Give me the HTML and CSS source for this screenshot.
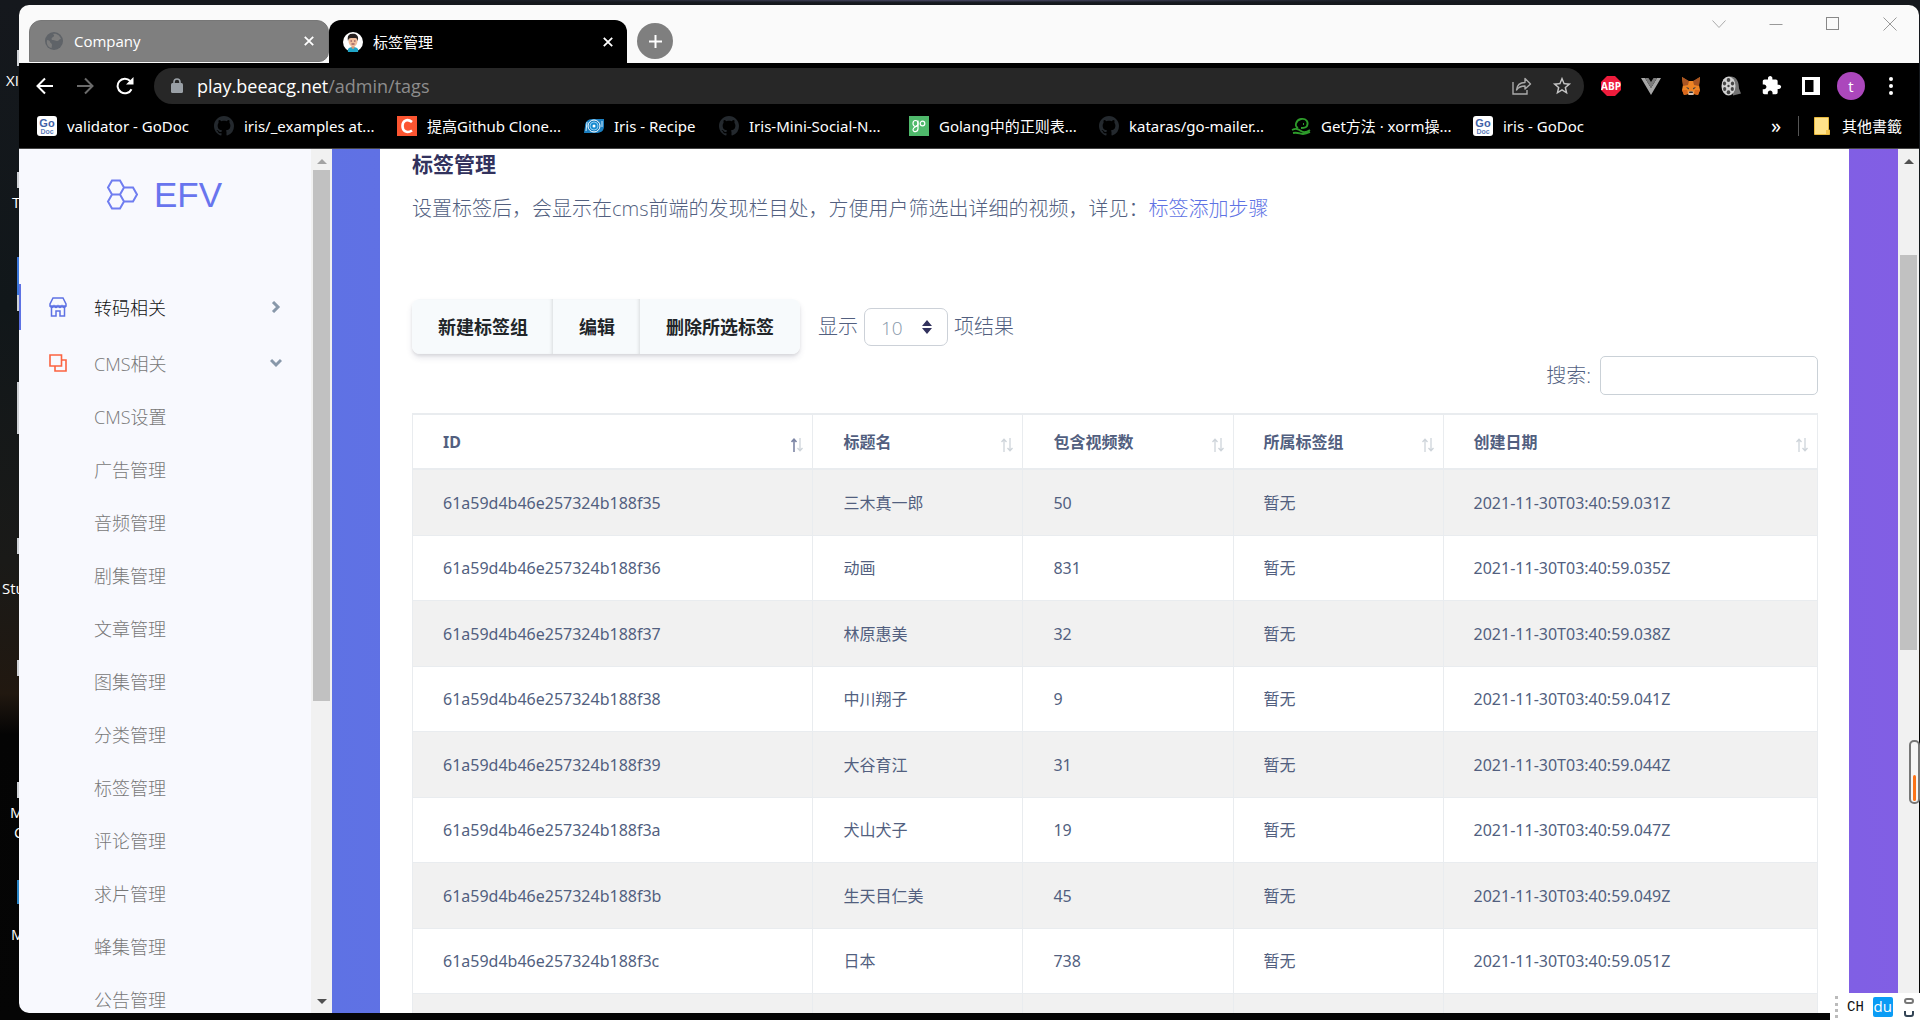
FILE: index.html
```html
<!DOCTYPE html>
<html lang="zh-CN">
<head>
<meta charset="utf-8">
<title>标签管理</title>
<link rel="stylesheet" href="styles.css">
</head>
<body>
<svg class="defs" aria-hidden="true">
  <symbol id="github" viewBox="0 0 16 16"><path fill="#24292e" d="M8 0C3.58 0 0 3.58 0 8c0 3.54 2.29 6.53 5.47 7.59.4.07.55-.17.55-.38 0-.19-.01-.82-.01-1.49-2.01.37-2.53-.49-2.69-.94-.09-.23-.48-.94-.82-1.13-.28-.15-.68-.52-.01-.53.63-.01 1.08.58 1.23.82.72 1.21 1.87.87 2.33.66.07-.52.28-.87.51-1.07-1.78-.2-3.64-.89-3.64-3.95 0-.87.31-1.59.82-2.15-.08-.2-.36-1.02.08-2.12 0 0 .67-.21 2.2.82.64-.18 1.32-.27 2-.27.68 0 1.36.09 2 .27 1.53-1.04 2.2-.82 2.2-.82.44 1.1.16 1.92.08 2.12.51.56.82 1.27.82 2.15 0 3.07-1.87 3.75-3.65 3.95.29.25.54.73.54 1.48 0 1.07-.01 1.93-.01 2.2 0 .21.15.46.55.38A8.013 8.013 0 0016 8c0-4.42-3.58-8-8-8z"/></symbol>
  <symbol id="godoc" viewBox="0 0 20 20"><rect width="20" height="20" rx="3" fill="#fff"/><text x="10" y="11" text-anchor="middle" font-family="Liberation Sans" font-weight="700" font-size="11" fill="#3f62a8">Go</text><text x="10" y="18" text-anchor="middle" font-family="Liberation Sans" font-weight="700" font-size="7" fill="#5d7dbb">Doc</text></symbol>
  <symbol id="close" viewBox="0 0 10 10"><path d="M0.8 0.8l8.4 8.4M9.2 0.8L0.8 9.2" stroke="#fff" stroke-width="1.8"/></symbol>
  <symbol id="sort" viewBox="0 0 12 14"><path d="M3 14V1.500M.5 4L3 1.200 5.500 4" fill="none" stroke="#ced4da" stroke-width="1.300"/><path d="M9 0v12.500M6.500 10L9 12.800 11.500 10" fill="none" stroke="#ced4da" stroke-width="1.300"/></symbol>
  <symbol id="sort-up" viewBox="0 0 12 14"><path d="M3 14V1.500M.5 4L3 1.200 5.500 4" fill="none" stroke="#7d86a5" stroke-width="1.600"/><path d="M9 0v12.500M6.500 10L9 12.800 11.500 10" fill="none" stroke="#ced4da" stroke-width="1.300"/></symbol>
  <symbol id="tri-up" viewBox="0 0 10 5"><path d="M0 5L5 0l5 5z" fill="currentColor"/></symbol>
  <symbol id="tri-down" viewBox="0 0 10 5"><path d="M0 0l5 5 5-5z" fill="currentColor"/></symbol>
</svg>

<div class="desktop" aria-hidden="true">
  <i class="shape s1"></i><i class="shape s2"></i><i class="shape s3"></i><i class="shape s4"></i><i class="shape s5"></i><i class="shape s6"></i><i class="shape s7"></i><i class="shape s8"></i><i class="shape s9"></i>
  <span class="label l1">XI</span><span class="label l2">T</span><span class="label l3">Stu</span><span class="label l4">M</span><span class="label l5">C</span><span class="label l6">M</span>
</div>

<div class="window">
  <header class="tabs">
    <div class="tab tab-idle">
      <svg class="favicon" viewBox="0 0 18 18"><circle cx="9" cy="9" r="9" fill="#5f6368"/><path d="M2 8c2 0 3 1 3 2s2 1 2 3-1 2 0 3c-3 0-6-3-5-8zM8 2c4-1 7 2 8 5-2 0-2 2-4 2s-2-1-4-1-2-2 0-3 1-2 0-3z" fill="#7d7d7d"/></svg>
      <span class="tab-title">Company</span>
      <button class="plain" aria-label="关闭"><svg class="x" ><use href="#close"/></svg></button>
    </div>
    <div class="tab tab-active">
      <svg class="avatar-icon" viewBox="0 0 20 20"><circle cx="10" cy="10" r="10" fill="#fff"/><path d="M5 20c-1-4 2-5 5-5s6 1 5 5a10 10 0 0 1-10 0z" fill="#20a6c8"/><path d="M8.500 13h3v3l-1.500 1-1.500-1z" fill="#d99a74"/><ellipse cx="10" cy="9" rx="4.500" ry="5.500" fill="#f0bd9b"/><path d="M5 9C4 4 6 2 8 2c3-1 8 0 7 6l-.5 1c0-2-1-3-2-3H8C6 6 5.500 7 5 9z" fill="#27201f"/><path d="M7.500 9h1.500M11 9h1.500M8.500 12h3" stroke="#513" stroke-width=".8"/></svg>
      <span class="tab-title">标签管理</span>
      <button class="plain" aria-label="关闭"><svg class="x"><use href="#close"/></svg></button>
    </div>
    <button class="new-tab" aria-label="新标签页"><svg viewBox="0 0 15 15" width="15" height="15"><path d="M7.500 1v13M1 7.500h13" stroke="#fff" stroke-width="2"/></svg></button>
    <div class="controls">
      <button class="plain" aria-label="搜索标签页"><svg width="14" height="14" viewBox="0 0 14 14"><path d="M.5 3.500L7 10.500l6.500-7" fill="none" stroke="#aaa"/></svg></button>
      <button class="plain" aria-label="最小化"><svg width="14" height="14" viewBox="0 0 14 14"><path d="M.5 7.500h13" stroke="#999"/></svg></button>
      <button class="plain" aria-label="最大化"><svg width="14" height="14" viewBox="0 0 14 14"><rect x=".5" y=".5" width="12" height="12" fill="none" stroke="#888"/></svg></button>
      <button class="plain" aria-label="关闭窗口"><svg width="14" height="14" viewBox="0 0 14 14"><path d="M.5.5l13 13m0-13l-13 13" stroke="#999"/></svg></button>
    </div>
  </header>

  <div class="toolbar">
    <div class="nav-buttons">
      <button class="plain" aria-label="后退"><svg width="18" height="18" viewBox="0 0 18 18"><path d="M17 9H2M9 1.500L1.500 9 9 16.500" fill="none" stroke="#fff" stroke-width="2"/></svg></button>
      <button class="plain" aria-label="前进"><svg width="18" height="18" viewBox="0 0 18 18"><path d="M1 9h15M9 1.500L16.500 9 9 16.500" fill="none" stroke="#6b6b6b" stroke-width="2"/></svg></button>
      <button class="plain" aria-label="刷新"><svg width="18" height="18" viewBox="0 0 18 18"><path d="M15.500 12.200A7.300 7.300 0 1 1 14.200 4" fill="none" stroke="#fff" stroke-width="2"/><path d="M17.500 0v7.500H10z" fill="#fff"/></svg></button>
    </div>
    <div class="omnibox">
      <svg width="12" height="15" viewBox="0 0 12 15"><rect x="0" y="5" width="12" height="10" rx="1.500" fill="#9aa0a6"/><path d="M3 6V4a3 3 0 0 1 6 0v2" fill="none" stroke="#9aa0a6" stroke-width="1.600"/></svg>
      <p class="url">play.beeacg.net<span>/admin/tags</span></p>
      <button class="plain" aria-label="分享"><svg width="20" height="18" viewBox="0 0 20 18"><path d="M1 5v12h14v-4" fill="none" stroke="#aaa" stroke-width="1.400"/><path d="M4.500 13c.5-5 3.500-7.500 8.500-7.500V1.500L18.500 7 13 12V9c-4 0-6.500 1-8.500 4z" fill="none" stroke="#aaa" stroke-width="1.400" stroke-linejoin="round"/></svg></button>
      <button class="plain" aria-label="加入书签"><svg width="22" height="22" viewBox="0 0 24 24"><path fill="#c4c4c4" d="M22 9.240l-7.190-.62L12 2 9.190 8.630 2 9.240l5.460 4.730L5.820 21 12 17.270 18.180 21l-1.630-7.030L22 9.240zM12 15.400l-3.760 2.270 1-4.280-3.320-2.880 4.380-.38L12 6.100l1.710 4.040 4.380.38-3.320 2.880 1 4.280L12 15.400z"/></svg></button>
    </div>
    <div class="extensions">
      <button class="plain" aria-label="ABP"><svg width="20" height="20" viewBox="0 0 20 20"><path d="M6 0h8l6 6v8l-6 6H6l-6-6V6z" fill="#ee1c3c"/><text x="10" y="13.500" font-family="Open Sans" font-weight="700" font-size="10" text-anchor="middle" fill="#fff">ABP</text></svg></button>
      <button class="plain" aria-label="Vue"><svg width="20" height="20" viewBox="0 0 20 20"><path d="M0 2h4l6 10 6-10h4L10 19z" fill="#a6a6a6"/><path d="M4 2h3.500L10 6l2.500-4H16l-6 10z" fill="#7a7a7a"/></svg></button>
      <button class="plain" aria-label="MetaMask"><svg width="20" height="20" viewBox="0 0 20 20"><path d="M1 1l6 4h6l6-4-1 8 1 5-2 5-4-1-1 1H8l-1-1-4 1-2-5 1-5z" fill="#ee8424"/><path d="M1 1l7 4-1 4-5 1zM19 1l-7 4 1 4 5 1z" fill="#a95522"/><path d="M1 14h5l1 4-4 1zM19 14h-5l-1 4 4 1z" fill="#d9671c"/><path d="M5 11l3 1-.5 1.500zM15 11l-3 1 .5 1.500z" fill="#233447"/><path d="M7.500 15.500h5V19h-5z" fill="#d7c1b3"/><path d="M8.500 15.500h3l.5 1.500H8z" fill="#22252c"/></svg></button>
      <button class="plain" aria-label="视频下载"><svg width="20" height="20" viewBox="0 0 20 20"><path d="M8 .5c8-1 10 6 10 12l2 5-8 2z" fill="#737373"/><ellipse cx="7.500" cy="10" rx="7" ry="9.500" fill="#d1d1d1"/><g fill="#444"><ellipse cx="7.500" cy="4" rx="1.800" ry="2"/><ellipse cx="3.500" cy="7.500" rx="1.600" ry="2"/><ellipse cx="11.500" cy="7.500" rx="1.600" ry="2"/><ellipse cx="3.700" cy="13" rx="1.600" ry="2"/><ellipse cx="11.300" cy="13" rx="1.600" ry="2"/><ellipse cx="7.500" cy="16.200" rx="1.800" ry="2"/><circle cx="7.500" cy="10" r="1.200"/></g></svg></button>
      <button class="plain" aria-label="扩展程序"><svg width="21" height="21" viewBox="0 0 24 24"><path fill="#fff" d="M20.500 11H19V7c0-1.100-.9-2-2-2h-4V3.500C13 2.120 11.880 1 10.500 1S8 2.120 8 3.500V5H4c-1.100 0-1.990.9-1.990 2v3.800H3.500c1.490 0 2.700 1.210 2.700 2.700s-1.210 2.700-2.700 2.700H2V20c0 1.100.9 2 2 2h3.800v-1.500c0-1.490 1.210-2.700 2.700-2.700s2.700 1.210 2.700 2.700V22H17c1.100 0 2-.9 2-2v-4h1.500c1.380 0 2.500-1.120 2.500-2.500S21.880 11 20.500 11z"/></svg></button>
      <button class="plain" aria-label="侧边栏"><svg width="18" height="18" viewBox="0 0 18 18"><path fill="#fff" fill-rule="evenodd" d="M0 0h18v18H0zM3 3v12h8.500V3z"/></svg></button>
      <button class="profile" aria-label="个人资料">t</button>
      <button class="plain" aria-label="更多"><svg width="4" height="18" viewBox="0 0 4 18" fill="#fff"><circle cx="2" cy="2" r="2"/><circle cx="2" cy="9" r="2"/><circle cx="2" cy="16" r="2"/></svg></button>
    </div>
  </div>

  <nav class="bookmarks" aria-label="书签">
    <div class="bookmark-list">
      <a href="#"><svg class="bm"><use href="#godoc"/></svg>validator - GoDoc</a>
      <a href="#"><svg class="bm"><use href="#github"/></svg>iris/_examples at...</a>
      <a href="#"><svg class="bm" viewBox="0 0 20 20"><path fill="#fc5531" d="M0 0h20v20H0z"/><path d="M15 6C10 2 5.500 5 5.500 10s4.500 8 9.500 4.500" fill="none" stroke="#fff" stroke-width="2.600"/></svg>提高Github Clone...</a>
      <a href="#"><svg class="bm" viewBox="0 0 20 20"><path d="M8 3h12v7c0 5-3 7-8 7H0l1-7c0-4 3-7 7-7z" fill="#1c7fc0"/><circle cx="10" cy="10" r="6" fill="none" stroke="#fff"/><circle cx="10" cy="10" r="4" fill="#168bd0" stroke="#a6dcfa" stroke-width=".8"/><circle cx="10" cy="10" r="1.500" fill="#fff"/><path d="M3 6l-1 9M18 5v6" stroke="#d0ecff"/></svg>Iris - Recipe</a>
      <a href="#"><svg class="bm"><use href="#github"/></svg>Iris-Mini-Social-N...</a>
      <a href="#"><svg class="bm" viewBox="0 0 20 20"><path fill="#4fb96b" d="M0 0h20v20H0z"/><g fill="none" stroke="#fff" stroke-width="1.200"><ellipse cx="6.500" cy="7.500" rx="2.500" ry="3"/><path d="M9 4.500v8c0 4-5 4-5 1 0-2 3-3 5-4.500"/><circle cx="13.500" cy="7.500" r="2.300"/></g></svg>Golang中的正则表...</a>
      <a href="#"><svg class="bm"><use href="#github"/></svg>kataras/go-mailer...</a>
      <a href="#"><svg class="bm" viewBox="0 0 20 20"><g fill="none" stroke="#2d9a2a" stroke-width="1.800"><path d="M1 14c4-2 6-1 9 1s6 1 9-1M2 17c5-1 7 1 10 1s5-1 7-2"/><path d="M7 12c-4-2-2-8 3-9 5-1 8 3 6 7-1 2-4 2-6 2"/><path d="M12 8h1"/></g></svg>Get方法 · xorm操...</a>
      <a href="#"><svg class="bm"><use href="#godoc"/></svg>iris - GoDoc</a>
    </div>
    <button class="more" aria-label="更多书签">»</button>
    <a class="other" href="#"><svg width="16" height="18" viewBox="0 0 16 18"><path fill="#ffe28a" stroke="#e8b93c" d="M.5.5h14v12l1 .5v4.500H.5z"/><path d="M12 17v-4h3v4z" fill="#f4c54f"/></svg>其他書籤</a>
  </nav>

  <div class="page">
    <aside class="sidebar">
      <a class="brand" href="#"><svg width="34" height="32" viewBox="0 0 34 32" fill="none" stroke="#6f7df0" stroke-width="2"><path d="M6 1.500h8l4 7-4 7H6l-4-7zM6 15.500h8l4 7-4 7H6l-4-7zM18 8.500h9l4 7-4 7h-9l-4-7z"/></svg>EFV</a>
      <nav class="menu">
        <a class="group current" href="#"><svg width="18" height="20" viewBox="0 0 18 20" fill="none" stroke="#5e72e4" stroke-width="1.500"><path d="M4 1h10l3 6v2H1V7zM2.500 10v9H7v-5h4v5h4.500v-9M1 9c1 2 3 2 4 0 1 2 3 2 4 0 1 2 3 2 4 0 1 2 3 2 4 0"/></svg><span>转码相关</span><svg class="chev" viewBox="0 0 12 12"><path d="M3 1l5 5-5 5"/></svg></a>
        <a class="group" href="#"><svg width="18" height="18" viewBox="0 0 18 18" fill="none" stroke="#fb6340" stroke-width="1.600"><path d="M1 1h11.500v11H1zM12.500 6H17v11H6v-5"/></svg><span>CMS相关</span><svg class="chev" viewBox="0 0 12 12"><path d="M1 3l5 5 5-5"/></svg></a>
        <ul class="submenu">
          <li><a href="#">CMS设置</a></li><li><a href="#">广告管理</a></li><li><a href="#">音频管理</a></li><li><a href="#">剧集管理</a></li><li><a href="#">文章管理</a></li><li><a href="#">图集管理</a></li><li><a href="#">分类管理</a></li><li><a href="#">标签管理</a></li><li><a href="#">评论管理</a></li><li><a href="#">求片管理</a></li><li><a href="#">蜂集管理</a></li><li><a href="#">公告管理</a></li>
        </ul>
      </nav>
    </aside>
    <div class="scrollbar scroll-side"><svg class="tri dim"><use href="#tri-up"/></svg><i class="before"></i><i class="thumb"></i><i class="after"></i><svg class="tri"><use href="#tri-down"/></svg></div>

    <div class="canvas">
      <main class="card">
        <h1>标签管理</h1>
        <p class="lead">设置标签后，会显示在cms前端的发现栏目处，方便用户筛选出详细的视频，详见：<a href="#">标签添加步骤</a></p>
        <div class="actions">
          <div class="btn-group"><button>新建标签组</button><button>编辑</button><button>删除所选标签</button></div>
          <label class="length" for="len">显示<span class="select-box"><select id="len"><option>10</option></select><svg width="10" height="14" viewBox="0 0 10 14"><path d="M0 6l5-6 5 6zM0 8l5 6 5-6z" fill="#32325d"/></svg></span>项结果</label>
        </div>
        <div class="filter"><label for="search">搜索:</label><input id="search" type="search"></div>
        <table>
          <colgroup><col class="c-id"><col class="c-mid"><col class="c-mid"><col class="c-mid"><col></colgroup>
          <thead><tr>
            <th scope="col"><div>ID<svg><use href="#sort-up"/></svg></div></th>
            <th scope="col"><div>标题名<svg><use href="#sort"/></svg></div></th>
            <th scope="col"><div>包含视频数<svg><use href="#sort"/></svg></div></th>
            <th scope="col"><div>所属标签组<svg><use href="#sort"/></svg></div></th>
            <th scope="col"><div>创建日期<svg><use href="#sort"/></svg></div></th>
          </tr></thead>
          <tbody>
            <tr><td>61a59d4b46e257324b188f35</td><td>三木真一郎</td><td>50</td><td>暂无</td><td>2021-11-30T03:40:59.031Z</td></tr>
            <tr><td>61a59d4b46e257324b188f36</td><td>动画</td><td>831</td><td>暂无</td><td>2021-11-30T03:40:59.035Z</td></tr>
            <tr><td>61a59d4b46e257324b188f37</td><td>林原惠美</td><td>32</td><td>暂无</td><td>2021-11-30T03:40:59.038Z</td></tr>
            <tr><td>61a59d4b46e257324b188f38</td><td>中川翔子</td><td>9</td><td>暂无</td><td>2021-11-30T03:40:59.041Z</td></tr>
            <tr><td>61a59d4b46e257324b188f39</td><td>大谷育江</td><td>31</td><td>暂无</td><td>2021-11-30T03:40:59.044Z</td></tr>
            <tr><td>61a59d4b46e257324b188f3a</td><td>犬山犬子</td><td>19</td><td>暂无</td><td>2021-11-30T03:40:59.047Z</td></tr>
            <tr><td>61a59d4b46e257324b188f3b</td><td>生天目仁美</td><td>45</td><td>暂无</td><td>2021-11-30T03:40:59.049Z</td></tr>
            <tr><td>61a59d4b46e257324b188f3c</td><td>日本</td><td>738</td><td>暂无</td><td>2021-11-30T03:40:59.051Z</td></tr>
            <tr><td></td><td></td><td></td><td></td><td></td></tr>
          </tbody>
        </table>
      </main>
    </div>
    <div class="scrollbar scroll-main"><svg class="tri"><use href="#tri-up"/></svg><i class="before"></i><i class="thumb"></i><i class="after"></i><svg class="tri"><use href="#tri-down"/></svg></div>
  </div>
</div>

<div class="gauge" aria-hidden="true"><i></i></div>
<div class="ime"><i class="grip"></i><span class="lang">CH</span><span class="du">du</span><svg width="10" height="20" viewBox="0 0 10 20" fill="none" stroke-width="2"><rect x="1" y="2" width="8" height="4" rx="2" stroke="#777"/><path d="M1 14v3q0 2 2 2h4q2 0 2-2v-3" stroke="#345"/></svg></div>
</body>
</html>
```
FILE: styles.css
```css
* { box-sizing: border-box; }
body {
  margin: 0;
  height: 100vh;
  display: flex;
  overflow: hidden;
  background:
    radial-gradient(ellipse at 50% 0, #4a4966 0, #1b1f27 30%, transparent 45%) 0 0 / 100% 5px no-repeat,
    linear-gradient(#15181d 0, #11171a 30%, #1a1a18 55%, #211810 68%, #040404 72%, #050505 100%);
  font-family: "Open Sans", "Noto Sans CJK SC", sans-serif;
}
a { color: inherit; text-decoration: none; }
button { font: inherit; border: 0; padding: 0; }
.plain { background: none; display: flex; align-items: center; justify-content: center; flex: none; }
.defs { position: absolute; width: 0; height: 0; }

/* desktop icons that show past the window edge */
.desktop { position: absolute; inset: 0 auto 0 0; width: 19px; overflow: hidden; color: #fff; font-size: 15px; line-height: 20px; }
.label { position: absolute; }
.l1 { left: 6px; top: 70px; } .l2 { left: 12px; top: 192px; } .l3 { left: 2px; top: 578px; }
.l4 { left: 10px; top: 802px; } .l5 { left: 14px; top: 822px; } .l6 { left: 11px; top: 924px; }
.shape { position: absolute; left: 17px; width: 2px; height: 16px; background: #cfd2d6; }
.s1 { top: 50px; } .s2 { top: 172px; } .s3 { top: 257px; height: 38px; background: #3d78dc; } .s4 { top: 295px; }
.s5 { top: 382px; height: 52px; } .s6 { top: 538px; } .s7 { top: 660px; } .s8 { top: 782px; } .s9 { top: 880px; height: 24px; background: #2a86c8; }

.window {
  position: relative;
  flex: 1;
  min-width: 0;
  margin: 5px 1px 7px 19px;
  display: flex;
  flex-direction: column;
  border-radius: 10px;
  overflow: hidden;
  background: #000;
}

/* tab strip */
.tabs { flex: none; display: flex; height: 58px; padding: 15px 0 0 10px; background: #fafafa; }
.tab { width: 300px; display: flex; align-items: center; padding: 0 14px 0 15px; gap: 11px; color: #fff; font-size: 15px; }
.tab-idle { height: 42px; background: #7f7f7f; border: 1px solid #777; border-radius: 12px 12px 10px 0; }
.tab-active { width: 298px; height: 43px; padding: 0 14px; gap: 10px; background: #000; border-radius: 12px 12px 0 0; }
.tab-title { flex: 1; }
.favicon { width: 18px; height: 18px; }
.avatar-icon { width: 20px; height: 20px; }
.x { width: 10px; height: 10px; }
.new-tab { display: flex; align-items: center; justify-content: center; width: 36px; height: 36px; margin: 3px 0 0 10px; border-radius: 50%; background: #7f7f7f; }
.controls { display: flex; height: 36px; margin: -14px 1px 0 auto; }
.controls .plain { width: 57px; }

/* address bar */
.toolbar { flex: none; display: flex; align-items: center; height: 45px; padding-left: 6px; }
.nav-buttons { display: flex; width: 129px; }
.nav-buttons .plain { width: 40px; height: 36px; }
.omnibox { flex: 1; display: flex; align-items: center; height: 36px; padding: 0 2px 0 17px; border-radius: 18px; background: #272727; }
.omnibox .plain { width: 40px; height: 36px; }
.url { flex: 1; margin: 0 0 0 14px; color: #fff; font-size: 18px; line-height: 24px; }
.url span { color: #8d8d8d; }
.extensions { display: flex; align-items: center; padding: 0 8px 0 7px; }
.extensions .plain { width: 40px; height: 36px; }
.profile { width: 28px; height: 28px; margin: 0 6px; border-radius: 50%; background: #ab47bc; color: #fff; font-size: 15px; line-height: 26px; }

/* bookmarks */
.bookmarks { flex: none; display: flex; align-items: center; height: 41px; padding: 0 17px 4px 18px; border-bottom: 1px solid #444; color: #fff; font-family: "Noto Sans", "Noto Sans CJK SC", sans-serif; font-size: 15px; }
.bookmark-list { flex: 1; display: grid; grid-template-columns: 177px 183px 187px 135px 190px 190px 192px 182px auto; }
.bookmark-list a { display: flex; align-items: center; gap: 10px; line-height: 20px; white-space: nowrap; }
.bm { width: 20px; height: 20px; flex: none; }
.more { width: 34px; margin-right: 1px; padding-right: 8px; background: none; color: #fff; font-size: 20px; line-height: 20px; }
.other { display: flex; align-items: center; gap: 12px; padding-left: 15px; border-left: 1px solid #555; line-height: 20px; }

/* page */
.page { flex: 1; min-height: 0; display: flex; background: #f8f9fe; font-weight: 300; }
.sidebar { flex: none; width: 292px; overflow: hidden; color: #777; font-size: 18px; }
.brand { display: flex; align-items: center; gap: 14px; height: 135px; padding: 0 0 43px 87px; color: #6875ee; font: 400 35px "Liberation Sans", sans-serif; }
.menu { display: flex; flex-direction: column; gap: 10px; }
.group { display: flex; align-items: center; height: 46px; padding: 0 29px 0 30px; gap: 27px; border-left: 0 solid #5e72e4; }
.group.current { padding-left: 28px; border-left-width: 2px; color: #111; }
.group span { flex: 1; }
.chev { width: 12px; height: 12px; fill: none; stroke: #8898aa; stroke-width: 3; }
.submenu { list-style: none; margin: -5px 0 0; padding: 0 0 0 75px; }
.submenu li { height: 53px; line-height: 53px; }

.scrollbar { flex: none; width: 21px; display: flex; flex-direction: column; align-items: center; padding: 10px 2px 9px; background: #f1f1f1; color: #505050; }
.scrollbar .before { margin-top: 6px; }
.scrollbar .after { margin-bottom: 14px; }
.thumb { width: 17px; background: #c1c1c1; }
.tri { width: 10px; height: 5px; flex: none; }
.dim { color: #a3a3a3; }
.scroll-side .thumb { flex: 531; }
.scroll-side .after { flex: 284; }
.scroll-main .before { flex: 85; }
.scroll-main .thumb { flex: 395; }
.scroll-main .after { flex: 335; }

.canvas { flex: 1; min-width: 0; overflow: hidden; padding: 0 49px 0 48px; background: linear-gradient(87deg, #5e72e4, #825ee4); }
.card { min-height: 100%; padding: 0 31px 0 32px; background: #fff; color: #525f7f; font-size: 20px; line-height: 30px; }
h1 { margin: 0; color: #32325d; font-size: 21px; font-weight: 700; line-height: 30px; }
.lead { margin: 15px 0 75px; }
.lead a { color: #5e72e4; }
.actions { display: flex; align-items: center; gap: 18px; }
.btn-group { display: flex; border-radius: 8px; box-shadow: 0 4px 6px #32325d1c, 0 2px 3px #00000014; }
.btn-group button { height: 55px; padding: 0 26px; background: #f7fafc; color: #212529; font-size: 18px; font-weight: 700; }
.btn-group button + button { margin-left: -1px; }
.btn-group button:not(:last-child) { box-shadow: inset -4px 0 4px -3px #00000030; }
.btn-group button:first-child { border-radius: 8px 0 0 8px; }
.btn-group button:last-child { border-radius: 0 8px 8px 0; }
.length { display: flex; align-items: center; gap: 6px; }
.select-box { display: grid; align-items: center; width: 84px; height: 38px; border: 1px solid #ccd1d8; border-radius: 7px; }
.select-box select { grid-area: 1 / 1; appearance: none; height: 36px; padding: 3px 16px 0; border: 0; background: none; color: #8898aa; font: inherit; font-size: 19px; line-height: 30px; }
.select-box svg { grid-area: 1 / 1; justify-self: end; margin-right: 15px; pointer-events: none; }
.filter { display: flex; align-items: center; justify-content: flex-end; gap: 9px; margin: 2px 0 18px; }
.filter input { width: 218px; height: 39px; border: 1px solid #cad1d7; border-radius: 5px; background: #fff; }

table { width: 100%; table-layout: fixed; border-collapse: separate; border-spacing: 0; border: 1px solid #e9ecef; border-width: 2px 0 0 1px; font-family: "Noto Sans", "Noto Sans CJK SC", sans-serif; font-size: 16px; font-weight: 400; line-height: 24px; }
.c-id { width: 28.500%; }
.c-mid { width: 14.950%; }
th, td { padding: 0 0 0 30px; border-right: 1px solid #e9ecef; border-bottom: 1px solid #e9ecef; text-align: left; }
th { height: 55px; border-bottom-width: 2px; font-weight: 700; }
th div { display: flex; align-items: center; justify-content: space-between; padding-right: 9px; }
th svg { width: 12px; height: 14px; margin-top: 6px; }
td { height: 65px; }
tr:nth-child(odd) td { height: 66px; background: #f1f1f1; }
thead tr:nth-child(odd) th { background: #fff; }

.gauge { position: absolute; right: 0; top: 740px; width: 11px; height: 64px; padding: 33px 2px 1px; border: 2px solid #777; border-radius: 5px; background: #f6f6f6; }
.gauge i { display: block; height: 100%; background: #fb7318; border-radius: 2px; }
.ime { position: absolute; right: 0; bottom: 0; width: 90px; height: 27px; display: flex; align-items: center; padding: 0 5px; background: #fff; gap: 9px; }
.grip { width: 3px; height: 22px; border-left: 3px dotted #bbb; }
.lang { color: #111; font: 400 14px "Liberation Mono", monospace; }
.du { width: 20px; height: 20px; border-radius: 2px; background: #0a9cf5; color: #fff; font-size: 15px; font-weight: 400; line-height: 18px; text-align: center; }
.ime svg { margin-left: 2px; }
```
